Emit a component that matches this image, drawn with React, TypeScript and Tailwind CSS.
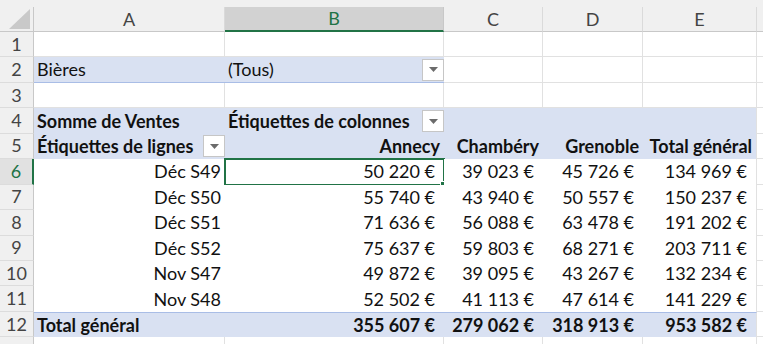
import React from 'react';

type Cell = {
  text?: string;
  bold?: boolean;
  align?: 'left' | 'right';
  num?: boolean;
  drop?: boolean;
};

type RowDef = {
  kind: 'plain' | 'filter' | 'head' | 'data' | 'total';
  cells: Cell[];
};

const COLS = ['A', 'B', 'C', 'D', 'E'];
const WIDTHS = ['w-[191px]', 'w-[219px]', 'w-[99px]', 'w-[100px]', 'w-[114px]'];

const rows: RowDef[] = [
  { kind: 'plain', cells: [] },
  { kind: 'filter', cells: [{ text: 'Bières' }, { text: '(Tous)', drop: true }] },
  { kind: 'plain', cells: [] },
  {
    kind: 'head',
    cells: [
      { text: 'Somme de Ventes', bold: true },
      { text: 'Étiquettes de colonnes', bold: true, drop: true },
      {},
      {},
      {},
    ],
  },
  {
    kind: 'head',
    cells: [
      { text: 'Étiquettes de lignes', bold: true, drop: true },
      { text: 'Annecy', bold: true, align: 'right' },
      { text: 'Chambéry', bold: true, align: 'right' },
      { text: 'Grenoble', bold: true, align: 'right' },
      { text: 'Total général', bold: true, align: 'right' },
    ],
  },
  ...[
    ['Déc S49', '50 220 €', '39 023 €', '45 726 €', '134 969 €'],
    ['Déc S50', '55 740 €', '43 940 €', '50 557 €', '150 237 €'],
    ['Déc S51', '71 636 €', '56 088 €', '63 478 €', '191 202 €'],
    ['Déc S52', '75 637 €', '59 803 €', '68 271 €', '203 711 €'],
    ['Nov S47', '49 872 €', '39 095 €', '43 267 €', '132 234 €'],
    ['Nov S48', '52 502 €', '41 113 €', '47 614 €', '141 229 €'],
  ].map((r): RowDef => ({
    kind: 'data',
    cells: r.map((t, i) => ({ text: t, align: 'right', num: i > 0 })),
  })),
  {
    kind: 'total',
    cells: [
      { text: 'Total général', bold: true },
      { text: '355 607 €', bold: true, align: 'right', num: true },
      { text: '279 062 €', bold: true, align: 'right', num: true },
      { text: '318 913 €', bold: true, align: 'right', num: true },
      { text: '953 582 €', bold: true, align: 'right', num: true },
    ],
  },
  { kind: 'plain', cells: [] },
];

const DropButton = () => (
  <div className="absolute right-0 top-1/2 -translate-y-1/2 w-[22px] h-[22px] bg-white border border-[#c6c6c6] flex items-center justify-center">
    <svg width="9" height="5" viewBox="0 0 9 5">
      <path d="M0 0 H9 L4.5 5 Z" fill="#6b6b6b" />
    </svg>
  </div>
);

function cellClass(kind: RowDef['kind'], col: number) {
  // pivot area cells hide the gridlines
  const inPivot =
    (kind === 'filter' && col < 2) || kind === 'head' || kind === 'data' || kind === 'total';
  if (!inPivot) return 'bg-white border-r border-b border-[#e1e1e1]';
  if (kind === 'filter') return 'bg-[#d9e1f2] border-b border-[#a9bde6]';
  if (kind === 'head') return col === 4 ? 'bg-[#d9e1f2] border-r border-r-[#e1e1e1]' : 'bg-[#d9e1f2]';
  if (kind === 'total')
    return col === 4
      ? 'bg-[#d9e1f2] border-t border-t-[#a9bde6] border-r border-r-[#e1e1e1]'
      : 'bg-[#d9e1f2] border-t border-[#a9bde6]';
  return col === 4 ? 'bg-white border-r border-[#e1e1e1]' : 'bg-white';
}

export default function App() {
  return (
    <div
      className="w-[763px] h-[344px] overflow-hidden bg-white text-[#111] select-none"
      style={{ fontFamily: 'Lato, "Liberation Sans", sans-serif' }}
    >
      {/* column headers */}
      <div className="flex h-[32px] bg-[#f0f0f0] pt-[7px]">
        <div className="w-[34px] shrink-0 relative border-r border-b border-[#c8c8c8]">
          <svg className="absolute left-[9px] top-[2px]" width="21" height="20" viewBox="0 0 21 20">
            <path d="M21 0 V20 H0 Z" fill="#c9c9c9" />
          </svg>
        </div>
        {COLS.map((c, i) =>
          c === 'B' ? (
            <div
              key={c}
              className={`${WIDTHS[i]} shrink-0 bg-[#d2d2d2] border-r border-[#c8c8c8] border-b-2 border-b-[#217346] flex items-center justify-center text-[18px] text-[#217346]`}
            >
              {c}
            </div>
          ) : (
            <div
              key={c}
              className={`${WIDTHS[i]} shrink-0 border-r border-b border-[#c8c8c8] border-r-[#dadada] flex items-center justify-center text-[18px] text-[#444]`}
            >
              {c}
            </div>
          )
        )}
        <div className="flex-1 border-b border-[#c8c8c8]" />
      </div>

      {/* sheet rows */}
      {rows.map((row, r) => {
        const selected = r === 5;
        const last = r === rows.length - 1;
        return (
          <div key={r} className="flex h-[25.45px]">
            <div
              className={`w-[34px] shrink-0 flex items-center justify-center text-[18px] border-b border-[#dcdcdc] ${
                selected
                  ? 'bg-[#e1e1e1] text-[#217346] border-r-2 border-r-[#217346]'
                  : 'bg-[#f0f0f0] text-[#444] border-r border-r-[#c8c8c8]'
              }`}
            >
              {last ? '' : r + 1}
            </div>
            {COLS.map((c, i) => {
              const cell = row.cells[i] ?? {};
              return (
                <div
                  key={c}
                  className={`${WIDTHS[i]} shrink-0 relative flex items-center text-[18px] whitespace-nowrap ${cellClass(
                    row.kind,
                    i
                  )} ${cell.align === 'right' ? 'justify-end' : 'justify-start'} ${
                    cell.num ? 'pr-[9px]' : cell.align === 'right' ? 'pr-[4px]' : 'pl-[3px]'
                  } ${cell.bold ? 'font-bold' : ''}`}
                >
                  {cell.text}
                  {cell.drop && <DropButton />}
                  {selected && i === 1 && (
                    <div className="absolute -left-px -top-px -right-px -bottom-px border-2 border-[#217346]">
                      <div className="absolute -right-[4px] -bottom-[4px] w-[7px] h-[7px] bg-[#217346] border border-white" />
                    </div>
                  )}
                </div>
              );
            })}
            <div className="flex-1 border-b border-[#e1e1e1]" />
          </div>
        );
      })}
    </div>
  );
}
